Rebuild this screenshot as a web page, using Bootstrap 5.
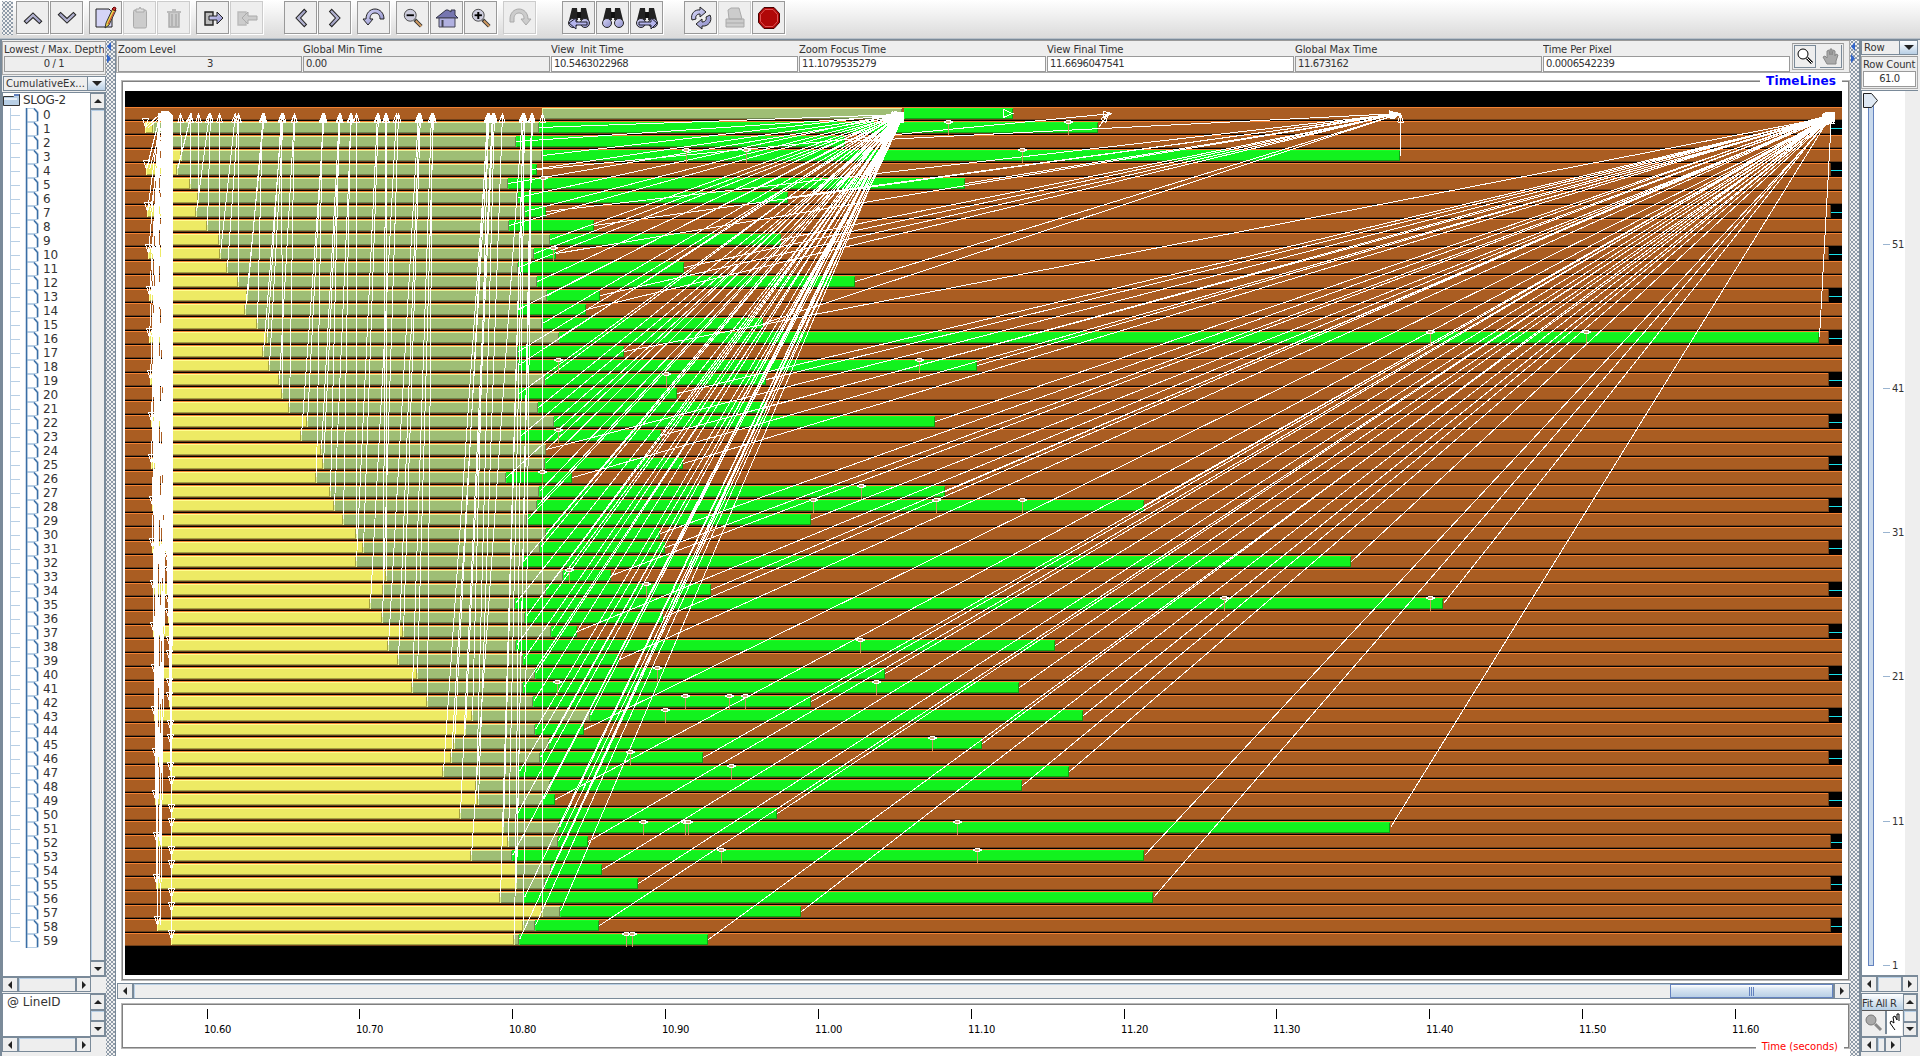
<!DOCTYPE html>
<html lang="en">
<head>
<meta charset="utf-8">
<title>TimeLines</title>
<link href="https://cdn.jsdelivr.net/npm/bootstrap@5.3.0/dist/css/bootstrap.min.css" rel="stylesheet">
<style>
*{box-sizing:border-box}
body{width:1920px;height:1056px;overflow:hidden;background:#eee;font-family:"DejaVu Sans",sans-serif;font-size:10px;line-height:12px;color:#333}
svg{display:block;flex:none}
.toolbar{height:38px;padding:1px 0 0 2px;background:linear-gradient(#fff,#dadada);flex:none;align-items:flex-start}
.grip,.dots{background-color:#f0f0f0;background-image:radial-gradient(circle,#8b98a6 .7px,transparent .9px),radial-gradient(circle,#8b98a6 .7px,transparent .9px);background-size:4px 4px;background-position:0 0,2px 2px}
.grip{width:11px;height:34px;margin-right:3px}
.tool{width:33px;height:33px;border:1px solid #999;background:#eee;box-shadow:1px 1px 0 #fff;margin-right:1px;display:flex;align-items:center;justify-content:center;padding:0;flex:none}
.tool.off{border-color:#ccc}
.g5{margin-left:5px}.g20{margin-left:20px}.g25{margin-left:25px}
.rule{height:2px;background:#7a8a99;border-top:1px solid #b8c0c8;flex:none}
.work{height:1016px;flex:none}
.lefty{width:106px;border-left:2px solid #7a8a99;flex:none;padding-top:1px}
.lab{height:13px;line-height:13px;white-space:nowrap;overflow:hidden;letter-spacing:-.08px}
.val{border:1px solid #999;height:16px;line-height:14px;padding-left:2px;letter-spacing:-.4px;white-space:nowrap}
.ro{background:#eee}.rw{background:#fff}
.framed{border:1px solid #aaa;border-top-color:#999}
.combo{border:1px solid #7a8a99;height:15px;line-height:13px;background:#eee;flex:none}
.combo b{width:18px;border-left:1px solid #7a8a99;background:linear-gradient(#fff,#b8cfe5);display:flex;align-items:center;justify-content:center}
.dn,.up,.lt,.rt{display:block;width:0;height:0;border:4px solid transparent}
.dn{border-top-color:#222;border-bottom:0}.up{border-bottom-color:#222;border-top:0}
.lt{border-right-color:#222;border-left:0}.rt{border-left-color:#222;border-right:0}
.combo .dn{border-width:5px 5px 0}
.sbtn{background:#eee;border:1px solid #7a8a99;display:flex;align-items:center;justify-content:center;flex:none}
.sbar{background:#eee;border:1px solid #7a8a99;box-shadow:inset 1px 1px 0 #b8cfe5;flex:1 1 0;min-width:0;min-height:0}
.w104{width:104px}
.tree{font-size:12px;line-height:14px;height:885px;border:1px solid #7a8a99;background:#fff;flex:none}
.node{height:14px;padding-left:7px}
.node span{padding-left:4px;letter-spacing:-.1px}
.divider{flex:none}
.mainp{width:1734px;background:#fff;flex:none}
.infobar{height:33px;border:1px solid #aaa;border-top-color:#999;background:#eee;flex:none;padding:2px 0 0 1px}
.cell{margin-right:1px;flex:none}
.etched{border:1px solid #808080;box-shadow:0 0 0 1px #b8b8b8;position:relative;flex:none}
.ttl{position:absolute;right:6px;top:-8px;background:#fff;color:#00f;font-weight:bold;font-size:12px;line-height:15px;padding:0 6px;letter-spacing:.15px}
.thumb{background:linear-gradient(#fff 0,#dbe7f3 30%,#b8cfe5);border:1px solid #6382bf;display:flex;align-items:center;justify-content:center;gap:1px}
.thumb i{width:1px;height:9px;background:#6382bf}
.sec{position:absolute;right:4px;bottom:-6px;background:#fff;color:#f00;padding:0 6px;line-height:12px}
.tog{width:23px;height:23px;background:#eee;display:flex;align-items:center;justify-content:center}
.fit{height:17px;background:linear-gradient(#fff,#b8cfe5);border-bottom:1px solid #555;line-height:19px;letter-spacing:-.3px;white-space:nowrap;width:41px}
</style>
<script src="https://cdn.jsdelivr.net/npm/bootstrap@5.3.0/dist/js/bootstrap.bundle.min.js"></script>
</head>
<body class="d-flex flex-column">
<svg width="0" height="0" class="position-absolute">
<defs>
<linearGradient id="lav" x1="0" y1="0" x2="1" y2="1"><stop offset="0" stop-color="#d8d8f8"/><stop offset="1" stop-color="#8c8cc8"/></linearGradient>
<linearGradient id="gry" x1="0" y1="0" x2="1" y2="1"><stop offset="0" stop-color="#c4c4dc"/><stop offset="1" stop-color="#9a9ac0"/></linearGradient>
<symbol id="chev" viewBox="0 0 24 24"><path d="M2.500 15.500l9.500-9 9.500 9-2.500 2.500-7-6.500L5 18z" fill="url(#gry)" stroke="#222" stroke-width="1.100"/></symbol>
<symbol id="undo" viewBox="0 0 24 24"><path d="M1 13h3C4 7 8 3 13 3s9 4 9 10h-4c0-4-2-6-5-6s-5 2-5 6h3l-5 6z" fill="url(#lav)" stroke="#222"/></symbol>
<symbol id="bino" viewBox="0 0 24 24"><path d="M5 2h5l1 12H2zM14 2h5l3 12h-9z" fill="#222"/><rect x="10" y="6" width="4" height="6" fill="#111"/><circle cx="6" cy="17" r="4.500" fill="url(#lav)" stroke="#222"/><circle cx="18" cy="17" r="4.500" fill="url(#lav)" stroke="#222"/></symbol>
<symbol id="lens" viewBox="0 0 24 24"><path d="M14 14l7 7" stroke="#333" stroke-width="4"/><path d="M15 15l6 6" stroke="#d19a60" stroke-width="2"/><circle cx="9" cy="9" r="6.500" fill="#ccd" stroke="#444"/><path d="M5 9h8" stroke="#000" stroke-width="2"/></symbol>
</defs>
</svg>
<div class="toolbar d-flex">
<div class="grip"></div>
<button class="tool"><svg width="22" height="22"><use href="#chev"/></svg></button>
<button class="tool"><svg width="22" height="22" style="transform:rotate(180deg)"><use href="#chev"/></svg></button>
<button class="tool g5"><svg width="24" height="24" viewBox="0 0 24 24"><path d="M2 3h13l3 3v15H2z" fill="#d4d4f6" stroke="#222"/><path d="M19 2l3 2-7 15-4 3 1-5z" fill="#ecd54a" stroke="#333"/><path d="M18 3l3 2 1-3-2-1z" fill="#c33" stroke="#600"/><path d="M20 6l-6 12" stroke="#c33"/></svg></button>
<button class="tool off"><svg width="24" height="24" viewBox="0 0 24 24"><rect x="5.500" y="4" width="13" height="18" rx="1.500" fill="#ccc" stroke="#aaa"/><path d="M8 6V3h3l1-2 1 2h3v3z" fill="#ddd" stroke="#aaa"/></svg></button>
<button class="tool off"><svg width="24" height="24" viewBox="0 0 24 24"><path d="M5 6h14M10 4h4M7 7v14h10V7M10 8v12M14 8v12" fill="#ccc" stroke="#aaa" stroke-width="1.400"/></svg></button>
<button class="tool g5"><svg width="24" height="24" viewBox="0 0 24 24"><path d="M4 6h8v13H4z" fill="#bbb" stroke="#222" stroke-width="1.400"/><path d="M8 10h8V6l6 6-6 6v-4H8z" fill="url(#lav)" stroke="#222"/></svg></button>
<button class="tool off"><svg width="24" height="24" viewBox="0 0 24 24"><path d="M3 6h8v13H3z" fill="#ccc" stroke="#bbb" stroke-width="1.400"/><path d="M22 10h-9V6l-6 6 6 6v-4h9z" fill="#ccc" stroke="#aaa"/></svg></button>
<button class="tool g20"><svg width="22" height="22" style="transform:rotate(-90deg)"><use href="#chev"/></svg></button>
<button class="tool"><svg width="22" height="22" style="transform:rotate(90deg)"><use href="#chev"/></svg></button>
<button class="tool g5"><svg width="24" height="24"><use href="#undo"/></svg></button>
<button class="tool g5"><svg width="22" height="22"><use href="#lens"/></svg></button>
<button class="tool"><svg width="24" height="24" viewBox="0 0 24 24"><path d="M1 12L11 4h2l3 2V4h4v5l3 3z" fill="#7676b0" stroke="#334"/><path d="M4 12h16v9H4z" fill="#b0b0e0" stroke="#445"/><path d="M7.500 14v7" stroke="#445" stroke-width="2"/></svg></button>
<button class="tool"><svg width="22" height="22"><use href="#lens"/><path d="M8.300 5v7" stroke="#000" stroke-width="2"/></svg></button>
<button class="tool off g5"><svg width="24" height="24" viewBox="0 0 24 24"><path d="M23 13h-3C20 7 16 3 11 3s-9 4-9 10v3h4v-3c0-4 2-6 5-6s5 2 5 6h-3l5 6z" fill="#ccc" stroke="#aaa"/></svg></button>
<button class="tool g25"><svg width="24" height="24"><use href="#bino"/><path d="M20 16H9v-4l-7 5 7 6v-4h11z" fill="#b4b4ec" stroke="#223"/></svg></button>
<button class="tool"><svg width="24" height="24"><use href="#bino"/></svg></button>
<button class="tool"><svg width="24" height="24"><use href="#bino"/><path d="M4 16h12v-4l6 5-6 6v-4H4z" fill="#b4b4ec" stroke="#223"/></svg></button>
<button class="tool g20"><svg width="24" height="24" viewBox="0 0 24 24"><path d="M3 14c-2-6 3-11 8-10V1l6 5-6 5V8c-3 0-5 2-4 5zM21 9c3 6-2 12-8 11v3l-6-5 6-5v3c3 0 5-2 4-5z" fill="url(#lav)" stroke="#222"/></svg></button>
<button class="tool off"><svg width="24" height="24" viewBox="0 0 24 24"><path d="M6 13L5 4l3-2h8l3 11zM3 13h18v8H3zM3 17h18" fill="#ccc" stroke="#aaa"/></svg></button>
<button class="tool"><svg width="24" height="24" viewBox="0 0 24 24"><path d="M7 1.500h10l5.500 6v9l-5.500 6H7l-5.500-6v-9z" fill="#b00808" stroke="#400"/><path d="M8 3.500h8l4.500 5v7l-4.500 5H8l-4.500-5v-7z" fill="none" stroke="#d55"/></svg></button>
</div>
<div class="rule"></div>
<div class="work d-flex">
  <!-- row labels -->
  <div class="lefty d-flex flex-column">
    <div class="framed" style="height:34px;padding:1px">
      <div class="lab">Lowest / Max. Depth</div>
      <div class="val ro text-center p-0">0 / 1</div>
    </div>
    <div class="combo d-flex" style="margin:1px 0 1px 1px"><span class="flex-fill" style="padding-left:2px">CumulativeEx...</span><b><i class="dn"></i></b></div>
    <div class="tree d-flex w104">
      <div class="flex-fill overflow-hidden" id="nodes">
        <div class="d-flex" style="height:15px"><svg width="18" height="15"><path d="M.5 3.500h10l2-2h4v11H.5z" fill="#b8cfe5" stroke="#333"/><path d="M1 5h13v2H1z" fill="#e8f0fa"/><path d="M11 1h5v2h-5z" fill="#6382bf"/></svg><span style="padding-left:2px;letter-spacing:-.3px">SLOG-2</span></div>
      </div>
      <div class="d-flex flex-column" style="width:15px"><div class="sbtn" style="height:16px"><i class="up"></i></div><div class="sbar"></div><div class="sbtn" style="height:15px"><i class="dn"></i></div></div>
    </div>
    <div class="d-flex w104" style="height:15px"><div class="sbtn" style="width:16px"><i class="lt"></i></div><div class="sbar"></div><div class="sbtn" style="width:15px"><i class="rt"></i></div><div style="width:15px"></div></div>
    <div class="d-flex w104" style="height:44px;border:1px solid #7a8a99;margin-top:1px;background:#fff"><div class="flex-fill" style="font-size:12px;line-height:16px;padding-left:4px">@ LineID</div><div class="d-flex flex-column" style="width:15px"><div class="sbtn" style="height:16px"><i class="up"></i></div><div class="sbar"></div><div class="sbtn" style="height:15px"><i class="dn"></i></div></div></div>
    <div class="d-flex w104" style="height:15px"><div class="sbtn" style="width:16px"><i class="lt"></i></div><div class="sbar"></div><div class="sbtn" style="width:15px"><i class="rt"></i></div><div style="width:15px"></div></div>
  </div>
  <div class="divider dots" style="width:10px;border-right:1px solid #7a8a99"><svg width="6" height="24"><path d="M5 2v9L1 6.500zM1 14v9l4-4.500z" fill="#36c"/></svg></div>
  <!-- timelines -->
  <div class="mainp flex-column d-flex">
    <div class="infobar d-flex" id="info">
      <div class="cell framed d-flex" style="width:52px;height:27px;margin:0 0 0 1px;padding:1px"><div class="tog" style="border:1px solid #7a8a99"><svg width="19" height="19"><circle cx="7" cy="7" r="5" fill="#fff" stroke="#000"/><path d="M11 11l5 5" stroke="#000" stroke-width="3"/><path d="M11 11l5 5" stroke="#fff"/></svg></div><div class="tog ms-1" style="border-right:1px solid #7a8a99;border-bottom:1px solid #7a8a99"><svg width="19" height="19"><path d="M6 17l-4-7 2-1 2 2V4l2-1 1 5V2h2v6l1-5 2 1v5l1-2 2 1-2 6v3z" fill="#aaa" stroke="#888"/></svg></div></div>
    </div>
    <div class="etched" style="margin:8px 1px 0 6px;height:899px;padding:9px 0 0 2px;background:#fff">
      <span class="ttl">TimeLines</span>
      <svg id="plot" width="1717" height="884" viewBox="125 91 1717 884" shape-rendering="crispEdges"></svg>
    </div>
    <div class="d-flex" style="height:16px;margin:3px 0 0 1px;flex:none"><div class="sbtn" style="width:16px"><i class="lt"></i></div><div class="sbar d-flex justify-content-end p-0"><div class="thumb" style="width:163px"><i></i><i></i><i></i></div></div><div class="sbtn" style="width:16px"><i class="rt"></i></div></div>
    <div class="etched" style="margin:5px 1px 0 6px;height:44px;background:#fff"><svg id="ruler" width="1722" height="40" viewBox="123 1005 1722 40"></svg><span class="sec">Time (seconds)</span></div>
  </div>
  <div class="divider dots" style="width:11px;border-right:2px solid #7a8a99"><svg width="6" height="24"><path d="M5 2v9L1 6.500zM1 14v9l4-4.500z" fill="#36c"/></svg></div>
  <!-- row zoom -->
  <div class="d-flex flex-column overflow-hidden" style="width:57px">
    <div class="combo d-flex"><span class="flex-fill" style="padding-left:2px">Row</span><b><i class="dn"></i></b></div>
    <div class="framed" style="height:33px;margin-top:1px;padding:1px"><div class="lab" style="letter-spacing:-.15px">Row Count</div><div class="val rw text-center p-0">61.0</div></div>
    <div class="d-flex" style="height:886px;border:1px solid #7a8a99;border-right:0;margin-top:1px;flex:none"><svg id="slide" width="43" height="884" viewBox="1863 91 43 884" style="background:#fff"></svg></div>
    <div class="d-flex" style="height:16px;flex:none"><div class="sbtn" style="width:16px"><i class="lt"></i></div><div class="sbar"></div><div class="sbtn" style="width:16px"><i class="rt"></i></div></div>
    <div class="d-flex" style="height:44px;margin-top:1px;border:1px solid #7a8a99;flex:none">
      <div style="width:41px"><div class="fit">Fit All R</div>
      <div class="d-flex"><div class="tog" style="width:25px;border-right:2px solid #7a8a99"><svg width="19" height="19"><circle cx="7" cy="7" r="5" fill="#aaa" stroke="#777"/><path d="M11 11l6 6" stroke="#888" stroke-width="3"/></svg></div><div style="width:15px;height:24px;background:#fff"><svg width="14" height="24"><path d="M8 19l-5-7 1-2 3 2-1-6 2-1 2 4 0-6h2v7" fill="#fff" stroke="#000"/></svg></div></div></div>
      <div class="d-flex flex-column" style="width:15px"><div class="sbtn" style="height:16px"><i class="up"></i></div><div class="sbar"></div><div class="sbtn" style="height:14px"><i class="dn"></i></div></div>
    </div>
    <div class="d-flex" style="height:15px;flex:none"><div class="sbtn" style="width:16px"><i class="lt"></i></div><div class="sbar" style="flex:0 0 8px"></div><div class="sbtn" style="width:16px"><i class="rt"></i></div></div>
  </div>
</div>
<script>
// tree nodes
let h='';
for(let i=0;i<60;i++)h+=`<div class="node d-flex"><svg width="29" height="14"><path d="M.5 0V${i==59?7:14}M.5 7.500H10" stroke="#b8cfe5"/><path d="M17 .5h8l3 3v10H17z" fill="#fff" stroke="#b8cfe5"/><path d="M16.500 0v14M24 .5l3.500 4V13" fill="none" stroke="#3a6ea5" stroke-width="1.500"/></svg><span>${i}</span></div>`;
document.getElementById('nodes').insertAdjacentHTML('beforeend',h);
// time fields
document.getElementById('info').insertAdjacentHTML('afterbegin',[['Zoom Level','3',184,0],['Global Min Time','0.00',247,0],['View&nbsp; Init Time','10.5463022968',247,1],['Zoom Focus Time','11.1079535279',247,1],['View Final Time','11.6696047541',247,1],['Global Max Time','11.673162',247,0],['Time Per Pixel','0.0006542239',247,1]]
 .map(([l,v,w,e])=>`<div class="cell" style="width:${w}px"><div class="lab">${l}</div><div class="val ${e?'rw':'ro'} ${v=='3'?'text-center p-0':''}">${v}</div></div>`).join(''));
// ruler and slider scale
h='';
for(let i=0;i<11;i++){const x=Math.floor(207+i*152.85);h+=`<path d="M${x}.5 1009v10" stroke="#000"/><text x="${x-3}" y="1033" font-size="10" letter-spacing="-.3" fill="#000">${(10.6+i*.1).toFixed(2)}</text>`}
document.getElementById('ruler').innerHTML=h;
h='<rect x="1869.500" y="105.500" width="5" height="860" fill="#c8d9ec" stroke="#6382bf"/><path d="M1864.500 93.500h8l6 7-6 7h-8z" fill="#dfe9f4" stroke="#222"/>';
[51,41,31,21,11,1].forEach((n,i)=>{const y=Math.round(243.5+i*144.3);h+=`<path d="M1884 ${y}.5h7" stroke="#9ab4d0"/><text x="1893" y="${y+4}" font-size="10" letter-spacing="-.3" fill="#333">${n}</text>`});
document.getElementById('slide').innerHTML=h;

// per process: [end of first state, end of second state, end of compute]
const D=[[542,542,1013],[153,539,1098],[170,516,845],[181,542,1400],[177,532,537],[190,508,965],[198,518,788],[196,525,546],[207,509,594],[219,550,781],[220,534,556],[227,518,684],[238,537,855],[247,547,600],[245,518,586],[257,542,763],[267,559,1819],[263,518,624],[269,518,977],[279,545,766],[282,519,677],[289,538,765],[307,554,935],[301,521,661],[321,546,546],[323,545,683],[316,506,572],[330,539,945],[334,537,1144],[343,527,811],[356,546,660],[363,540,665],[356,523,1351],[386,563,611],[383,546,711],[370,515,1443],[382,525,663],[403,551,577],[388,516,1055],[398,523,619],[417,535,885],[412,523,1019],[427,533,811],[472,590,1083],[465,535,584],[454,549,982],[451,540,703],[443,519,1069],[476,550,1022],[478,543,555],[460,517,777],[503,559,1390],[508,558,588],[471,512,1144],[516,551,602],[516,545,638],[500,524,1153],[542,560,801],[523,535,599],[514,519,708]];
// x where the reply of each process reaches process 0
const TIP=[0,172,172,180,191,190,198,209,210,219,235,238,238,263,264,262,281,282,283,294,281,294,323,324,339,340,322,339,351,350,356,378,377,386,385,396,398,420,418,419,433,431,432,488,493,487,489,488,494,502,492,523,524,522,532,531,523,542,531,524];
const EV={1:[948,1068],3:[686,746,1022],5:[543],10:[553],16:[1430,1586],18:[558,919],19:[666],23:[558],26:[542],27:[861],28:[813,936,1022],33:[569],34:[646],35:[1224,1430],38:[860],40:[657],41:[557,876],42:[685,729,745],43:[665],45:[932],46:[630],47:[731],51:[643,685,688,957],53:[721,977],59:[626,632]};
const R=(x,y,w,hh,c)=>`<rect x="${x}" y="${y}" width="${w}" height="${hh}" fill="${c}"/>`;
const bar=(x,e,y,c,l,d)=>R(x,y+1,e-x,11,c)+R(x,y+1,e-x,1,l)+R(x,y+11,e-x,1,d)+R(x,y+1,1,11,l)+R(e-1,y+2,1,10,d);
let s=R(125,91,1717,884,'#000'),L='',E='';
const seg=(a,b,c,d)=>{L+=`M${a+.5} ${b+.5}L${c+.5} ${d+.5}`};
// arrow head drawn at (x,y), pointing back from (fx,fy)
const head=(x,y,fx,fy,n=9)=>{const t=Math.atan2(y-fy,x-fx),c=Math.cos(t),q=Math.sin(t),bx=x-n*c,by=y-n*q;seg(x,y,bx-3*q,by+3*c);seg(x,y,bx+3*q,by-3*c);seg(bx-3*q,by+3*c,bx+3*q,by-3*c)};
const arrow=(fx,fy,x,y,n)=>{seg(fx,fy,x,y);head(x,y,fx,fy,n)};
for(let r=0;r<60;r++){
 const y=107+14*r,m=y+6,cut=r%3==1,e=cut?(r>9&&r<50?1829:1831):1842;
 s+=R(125,y,e-125,13,'#aa5d22')+R(125,y,e-125,1,'#f58233')+R(125,y+12,e-125,1,'#70401a');
 if(cut)s+=R(e-1,y,1,13,'#70401a')+R(e,m+1,1842-e,1,'#19e0ea');
 const [a,b,c]=D[r];
 if(r==0){s+=bar(542,902,y,'#9fbe75','#e3f5a0','#6f8551')+bar(904,1013,y,'#12f21e','#18ff2a','#0ca516');continue}
 const st=cut?Math.round(144+13*Math.sqrt(r/58)*(r/58*.3+.7)):Math.round(161+10*Math.min(1,r/50));
 s+=bar(st,a,y,'#edea64','#ffff92','#a3a144')+bar(a,b,y,'#9fbe75','#e3f5a0','#6f8551');
 if(c>b)s+=bar(b,c,y,'#12f21e','#18ff2a','#0ca516');
 const src=cut?160-2*r/59:162+9*r/59;
 seg(Math.round(src),113,st,m);head(st,m,st,0);
 if(cut)seg(164+r*.1,113,st+3,m);
 if(r>2)arrow(a,m,TIP[r],113);
 arrow(b,m,898+(r*7)%6,113+r%3,7);
 if(r==1||r==4)arrow(c,m,1108+(r==4?4:0),113);
 else if(r<16)arrow(c,m,1400-(r==3?0:r%3),113);
 else arrow(c,m,1830+(r%5),114+r%3,8);
 (EV[r]||[]).forEach(x=>E+=R(x,y+1,1,13,'#c99a62')+R(x-4,y,9,2,'#fff')+R(x-2,y-1,5,4,'#fff')+R(x-2,y,4,2,'#d2a679'));
}
L+='M1003.500 109.500v8l9-4z';
s+=`<path d="M161 111h8l4 5v530h-2l-4-60-3-190-3-60z" fill="#fff"/><path d="${L}" fill="none" stroke="#fff"/>`+R(895,112,9,10,'#fff')+R(1825,112,10,10,'#fff')+E;
document.getElementById('plot').innerHTML=s;
</script>
</body>
</html>
